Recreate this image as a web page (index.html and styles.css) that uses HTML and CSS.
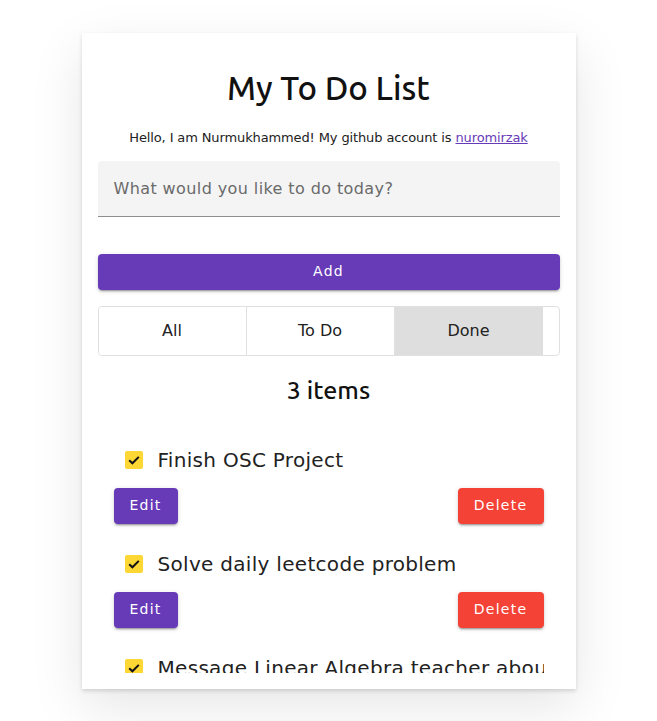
FILE: index.html
```html
<!DOCTYPE html>
<html lang="en">
<head>
<meta charset="utf-8">
<title>My To Do List</title>
<link rel="stylesheet" href="styles.css">
</head>
<body>
<main class="card">
  <h1 class="title">My To Do List</h1>
  <p class="intro">Hello, I am Nurmukhammed! My github account is <a class="link" href="#">nuromirzak</a></p>
  <div class="field">
    <span class="placeholder">What would you like to do today?</span>
  </div>
  <button class="btn btn-add">Add</button>
  <div class="toggle">
    <button class="toggle-btn">All</button>
    <button class="toggle-btn">To Do</button>
    <button class="toggle-btn is-active">Done</button>
  </div>
  <h2 class="count">3 items</h2>
  <ul class="list">
    <li class="item">
      <div class="item-row">
        <span class="check"><svg viewBox="0 0 18 18" width="18" height="18"><path d="M4.2 9.2 L7.4 12.3 L13.8 5.9" fill="none" stroke="#111" stroke-width="2"/></svg></span>
        <span class="item-text">Finish OSC Project</span>
      </div>
      <div class="item-actions">
        <button class="btn btn-edit">Edit</button>
        <button class="btn btn-delete">Delete</button>
      </div>
    </li>
    <li class="item">
      <div class="item-row">
        <span class="check"><svg viewBox="0 0 18 18" width="18" height="18"><path d="M4.2 9.2 L7.4 12.3 L13.8 5.9" fill="none" stroke="#111" stroke-width="2"/></svg></span>
        <span class="item-text">Solve daily leetcode problem</span>
      </div>
      <div class="item-actions">
        <button class="btn btn-edit">Edit</button>
        <button class="btn btn-delete">Delete</button>
      </div>
    </li>
    <li class="item">
      <div class="item-row">
        <span class="check"><svg viewBox="0 0 18 18" width="18" height="18"><path d="M4.2 9.2 L7.4 12.3 L13.8 5.9" fill="none" stroke="#111" stroke-width="2"/></svg></span>
        <span class="item-text">Message Linear Algebra teacher about the exam</span>
      </div>
      <div class="item-actions">
        <button class="btn btn-edit">Edit</button>
        <button class="btn btn-delete">Delete</button>
      </div>
    </li>
  </ul>
</main>
</body>
</html>
```
FILE: styles.css
```css
* { box-sizing: border-box; }
html, body { margin: 0; padding: 0; background: #fff; }
body {
  font-family: "DejaVu Sans", sans-serif;
  color: #222;
  display: flex;
  justify-content: center;
  padding-top: 33px;
  height: 721px;
  overflow: hidden;
}
.card {
  width: 494px;
  height: 656px;
  background: #fff;
  padding: 16px 16px 16px;
  display: flex;
  flex-direction: column;
  box-shadow: 0 2px 4px rgba(0,0,0,0.14), 0 18px 50px rgba(0,0,0,0.10);
}
.title {
  margin: 19px 0 0;
  font-family: "Ubuntu", "Noto Sans", sans-serif;
  font-weight: 500;
  font-size: 33px;
  line-height: 40px;
  text-align: center;
  color: #111;
}
.intro {
  margin: 22px 0 0;
  font-size: 13px;
  line-height: 16px;
  text-align: center;
  color: #222;
  letter-spacing: -0.12px;
}
.link { color: #673ab7; }
.field {
  margin-top: 15px;
  height: 56px;
  background: #f4f4f4;
  border-radius: 4px 4px 0 0;
  border-bottom: 1px solid #8e8e8e;
  display: flex;
  align-items: center;
  padding: 0 16px;
}
.placeholder {
  font-size: 16px;
  color: #6a6a6a;
  letter-spacing: 0.4px;
}
.btn {
  font-family: "DejaVu Sans", sans-serif;
  font-size: 14px;
  letter-spacing: 1.25px;
  color: #fff;
  border: 0;
  border-radius: 4px;
  height: 36px;
  padding: 0 0 2px;
  box-shadow: 0 3px 1px -2px rgba(0,0,0,.2), 0 2px 2px 0 rgba(0,0,0,.14), 0 1px 5px 0 rgba(0,0,0,.12);
}
.btn-add {
  margin-top: 37px;
  width: 100%;
  background: #673ab7;
}
.toggle {
  margin-top: 16px;
  height: 50px;
  border: 1px solid #e0e0e0;
  border-radius: 4px;
  display: flex;
  overflow: hidden;
}
.toggle-btn {
  width: 148px;
  height: 100%;
  border: 0;
  border-right: 1px solid #e0e0e0;
  background: #fff;
  font-family: "DejaVu Sans", sans-serif;
  font-size: 16px;
  color: #222;
  padding: 0 0 1px;
}
.toggle-btn.is-active { background: #dedede; border-right: 0; }
.count {
  margin: 20px 0 0;
  font-family: "Ubuntu", "Noto Sans", sans-serif;
  font-weight: 500;
  font-size: 25px;
  line-height: 28px;
  text-align: center;
  color: #111;
}
.list {
  list-style: none;
  margin: 36px 0 0;
  padding: 0;
  flex: 1;
  min-height: 0;
  overflow: hidden;
}
.item {
  padding: 0 16px;
  margin-bottom: 20px;
}
.item-row {
  height: 40px;
  display: flex;
  align-items: center;
  overflow: hidden;
  white-space: nowrap;
}
.check {
  flex: none;
  width: 18px;
  height: 18px;
  margin-left: 11px;
  background: #fdd835;
  border-radius: 2px;
  display: flex;
}
.item-text {
  margin-left: 15px;
  font-size: 20px;
  color: #222;
  letter-spacing: 0.3px;
}
.item-actions {
  margin-top: 8px;
  display: flex;
  justify-content: space-between;
}
.btn-edit { width: 64px; background: #673ab7; }
.btn-delete { width: 86px; background: #f44336; }
```
